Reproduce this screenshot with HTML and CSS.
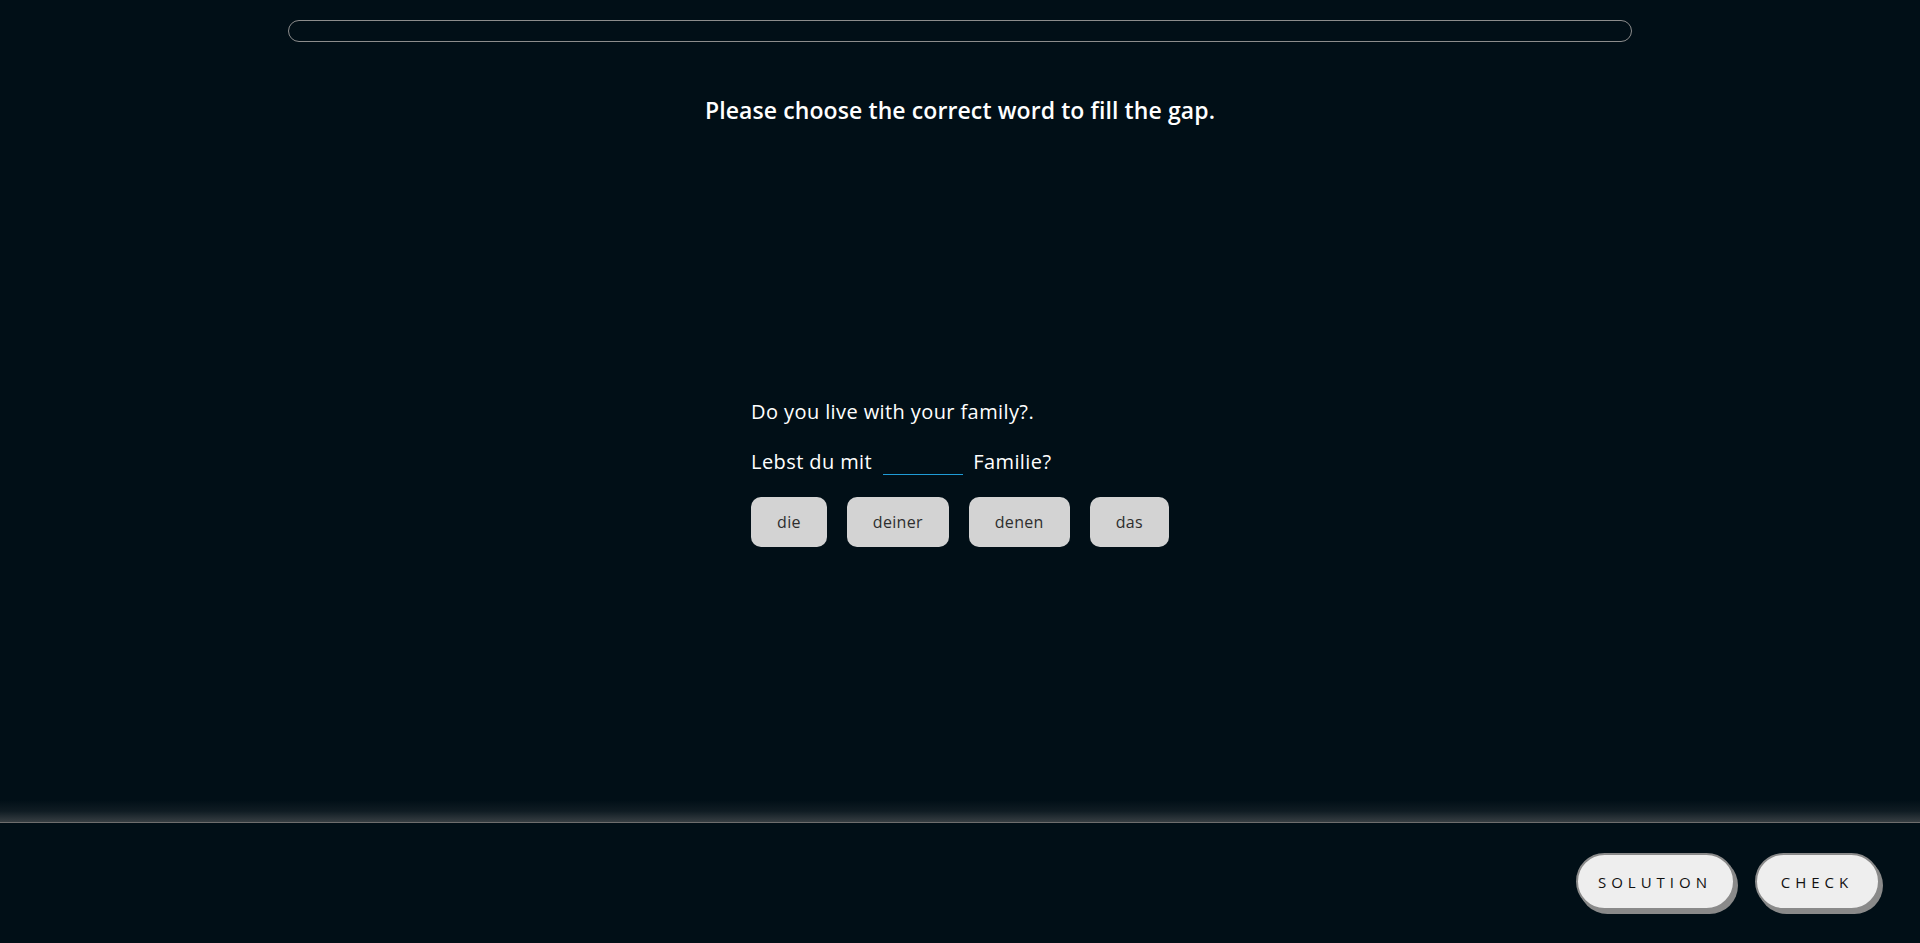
FILE: index.html
```html
<!DOCTYPE html>
<html lang="en">
<head>
<meta charset="utf-8">
<title>Exercise</title>
<link rel="stylesheet" href="styles.css">
</head>
<body>
<div class="page">
  <main class="main">
    <div class="progress"></div>
    <h1 class="title">Please choose the correct word to fill the gap.</h1>
    <section class="exercise">
      <div class="card">
        <p class="prompt">Do you live with your family?.</p>
        <p class="sentence">Lebst du mit <span class="gap"></span> Familie?</p>
        <div class="choices">
          <button class="choice">die</button>
          <button class="choice">deiner</button>
          <button class="choice">denen</button>
          <button class="choice">das</button>
        </div>
      </div>
    </section>
  </main>
  <div class="glow"></div>
  <footer class="footer">
    <button class="action solution">SOLUTION</button>
    <button class="action check">CHECK</button>
  </footer>
</div>
</body>
</html>
```

FILE: styles.css
```css
* { box-sizing: border-box; }
html, body {
  margin: 0;
  padding: 0;
  background: #010f17;
}
body {
  font-family: "Open Sans", "Noto Sans", sans-serif;
  color: #ffffff;
}
.page {
  height: 943px;
  display: flex;
  flex-direction: column;
  overflow: hidden;
}
.main {
  flex: 1;
  display: flex;
  flex-direction: column;
  align-items: center;
}
.progress {
  margin-top: 20px;
  width: 1344px;
  height: 22px;
  border: 1px solid #8c8c8c;
  border-radius: 11px;
}
.title {
  margin: 53px 0 0 0;
  font-size: 23px;
  font-weight: 600;
  line-height: 30px;
  letter-spacing: 0.1px;
}
.exercise {
  flex: 1;
  display: flex;
  justify-content: center;
  padding-top: 274px;
}
.card {
  display: flex;
  flex-direction: column;
}
.prompt {
  margin: 0;
  font-size: 20px;
  line-height: 26px;
  letter-spacing: 0.4px;
}
.sentence {
  margin: 24px 0 0 0;
  font-size: 20px;
  line-height: 26px;
  letter-spacing: 0.4px;
}
.gap {
  display: inline-block;
  width: 80px;
  height: 24px;
  margin: 0 5px;
  border-bottom: 1px solid #1f9bd6;
  vertical-align: -6px;
}
.choices {
  margin-top: 22px;
  display: flex;
  gap: 20px;
}
.choice {
  height: 50px;
  padding: 0 26px;
  border: none;
  border-radius: 10px;
  background: #d3d3d3;
  color: #2e2e2e;
  font-family: "Open Sans", "Noto Sans", sans-serif;
  font-size: 16px;
  font-weight: 400;
  letter-spacing: 0.3px;
}
.glow {
  height: 22px;
  background: linear-gradient(to bottom, rgba(120,120,120,0) 0%, rgba(120,120,120,0.12) 50%, rgba(120,120,120,0.45) 100%);
}
.footer {
  height: 121px;
  border-top: 1px solid #6e6e6e;
  display: flex;
  justify-content: flex-end;
  align-items: flex-start;
  gap: 20px;
  padding: 30px 40px 0 0;
}
.action {
  height: 57px;
  border: 2px solid #8a8a8a;
  border-radius: 29px;
  background: #eeeeee;
  box-shadow: 3px 4px 0 #8a8a8a;
  color: #111111;
  font-family: "Open Sans", "Noto Sans", sans-serif;
  font-size: 15px;
  font-weight: 500;
  letter-spacing: 5px;
}
.solution { width: 159px; padding-left: 5px; }
.check { width: 125px; padding-left: 5px; }
```
